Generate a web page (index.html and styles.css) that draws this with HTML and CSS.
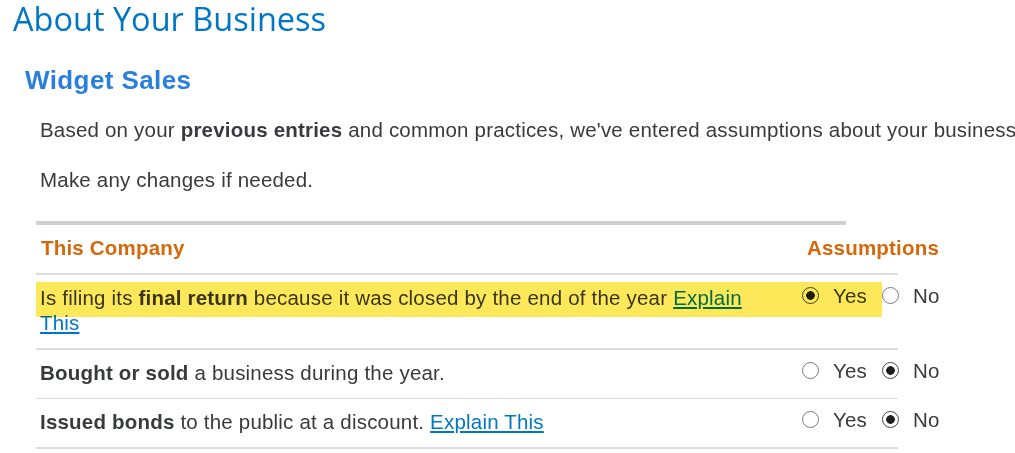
FILE: index.html
```html
<!DOCTYPE html>
<html>
  <head>
    <meta name="viewport" content="width=device-width, initial-scale=1" />
    <link rel="stylesheet" href="styles.css">
  </head>

  <body>
    <h1 class="page-title">About Your Business</h1>

    <h2 class="section-title">Widget Sales</h2>

    <p class="intro">Based on your <b>previous entries</b> and common practices, we've entered assumptions about your business.</p>
    <p class="intro second">Make any changes if needed.</p>

    <div class="assumptions">
      <div class="rule"></div>

      <div class="row head">
        <div class="col-head">This Company</div>
        <div class="col-head right">Assumptions</div>
      </div>

      <div class="row flagged">
        <div class="question">Is filing its <b>final return</b> because it was closed by the end of the year <a href="#" class="explain">Explain This</a></div>
        <div class="answer">
          <input type="radio" name="q1" checked /><span class="opt">Yes</span>
          <input type="radio" name="q1" /><span class="opt">No</span>
        </div>
      </div>

      <div class="row thin">
        <div class="question"><b>Bought or sold</b> a business during the year.</div>
        <div class="answer">
          <input type="radio" name="q2" /><span class="opt">Yes</span>
          <input type="radio" name="q2" checked /><span class="opt">No</span>
        </div>
      </div>

      <div class="row">
        <div class="question"><b>Issued bonds</b> to the public at a discount. <a href="#" class="explain">Explain This</a></div>
        <div class="answer">
          <input type="radio" name="q3" /><span class="opt">Yes</span>
          <input type="radio" name="q3" checked /><span class="opt">No</span>
        </div>
      </div>
    </div>
  </body>
</html>
```

FILE: styles.css
```css
  body {
    margin: 0;
    background: #fff;
    font-family: "Liberation Sans", Arial, Helvetica, sans-serif;
    font-size: 20.5px;
    line-height: 25px;
    letter-spacing: 0.2px;
    color: #393a3d;
    overflow: hidden;
  }

  .page-title {
    margin: 0;
    padding-left: 13px;
    font-family: "Open Sans", Lato, sans-serif;
    font-weight: normal;
    font-size: 32.5px;
    line-height: 37px;
    letter-spacing: 0;
    color: #0077c5;
  }

  .section-title {
    margin: 28px 0 0 0;
    padding-left: 25px;
    font-size: 26px;
    line-height: 30px;
    letter-spacing: 0.4px;
    color: #2b7fdc;
  }

  .intro {
    margin: 22px 0 0 0;
    padding-left: 40px;
    white-space: nowrap;
  }

  .intro.second {
    margin-top: 25px;
  }

  .assumptions {
    margin: 29px 0 0 36px;
    width: 862px;
  }

  .rule {
    width: 810px;
    height: 4px;
    background-color: #d0d0d0;
  }

  .row {
    position: relative;
    display: grid;
    grid-template-columns: 1fr 98px;
    padding: 10px 0 13px 0;
    border-bottom: 2px solid #dddddd;
  }

  .row.thin {
    border-bottom-width: 1px;
  }

  .col-head {
    padding-left: 5px;
    font-weight: bold;
    color: #d4680b;
  }

  .col-head.right {
    padding-left: 7px;
    white-space: nowrap;
  }

  .question {
    padding: 0 20px 0 4px;
  }

  .explain {
    color: #0077c5;
    text-decoration: underline;
  }

  .answer {
    display: flex;
    align-items: center;
    height: 25px;
    margin-top: -2px;
    padding-left: 2px;
    white-space: nowrap;
  }

  input[type="radio"] {
    appearance: none;
    -webkit-appearance: none;
    box-sizing: border-box;
    width: 17px;
    height: 17px;
    margin: 0 14px 0 0;
    border: 1px solid #7a7a7a;
    border-radius: 50%;
    background: #fff;
    flex-shrink: 0;
  }

  input[type="radio"]:checked {
    border-color: #444;
    background: radial-gradient(circle, #1e1e1e 0 4px, #fff 4.6px);
  }

  .opt {
    margin-right: 15px;
  }

  /* yellow marker over the first question */
  .row.flagged::after {
    content: "";
    position: absolute;
    left: 0;
    top: 7px;
    width: 846px;
    height: 35px;
    background-color: #fde859;
    mix-blend-mode: multiply;
    pointer-events: none;
  }
```
